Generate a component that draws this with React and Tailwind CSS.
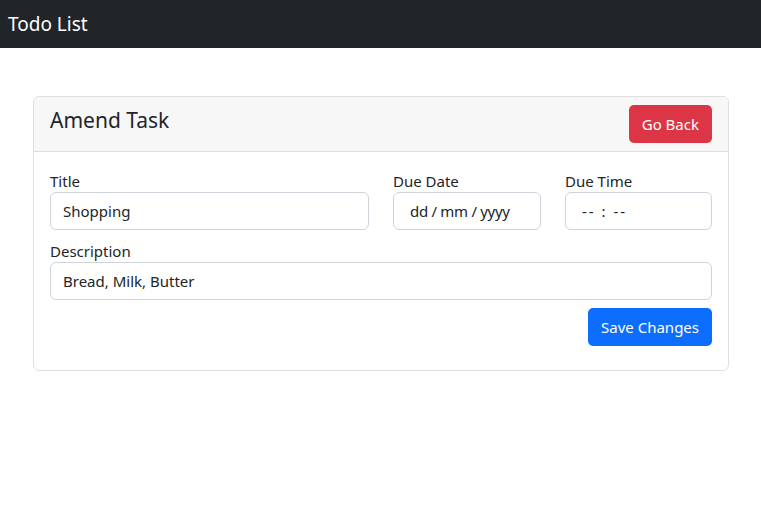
import React, { useState } from 'react';

const font = { fontFamily: '"Noto Sans", "Open Sans", sans-serif' };

export default function App() {
    const [title, setTitle] = useState('Shopping');
    const [description, setDescription] = useState('Bread, Milk, Butter');

    return (
        <div className="min-h-screen bg-white text-[#212529]" style={font}>
            <nav className="h-12 bg-[#212529] flex items-center px-2">
                <span className="text-[19px] text-white leading-none">Todo List</span>
            </nav>

            <div className="pt-12 pl-[33px] pr-8">
                <div className="border border-[#dfdfdf] rounded-[6px]">
                    <div className="h-[55px] bg-[#f7f7f7] border-b border-[#dfdfdf] flex items-start justify-between pl-4 pr-4 rounded-t-[6px]">
                        <h2 className="text-[21px] leading-none mt-[13px]">Amend Task</h2>
                        <button className="mt-2 h-[38px] px-[13px] bg-[#dc3545] text-white text-[15px] rounded-[5px]">
                            Go Back
                        </button>
                    </div>

                    <div className="px-4 pt-[18px] pb-6">
                        <div className="grid grid-cols-[319px_148px_147px] gap-x-6">
                            <div>
                                <label className="block text-[15px] leading-[22px]">Title</label>
                                <input
                                    className="w-full h-[38px] border border-[#ced4da] rounded-[6px] px-3 text-[15px] outline-none"
                                    value={title}
                                    onChange={(e) => setTitle(e.target.value)}
                                />
                            </div>
                            <div>
                                <label className="block text-[15px] leading-[22px]">Due Date</label>
                                <div className="h-[38px] border border-[#ced4da] rounded-[6px] pl-4 text-[15px] tracking-[-0.3px] flex items-center">
                                    dd / mm / yyyy
                                </div>
                            </div>
                            <div>
                                <label className="block text-[15px] leading-[22px]">Due Time</label>
                                <div className="h-[38px] border border-[#ced4da] rounded-[6px] pl-4 text-[15px] tracking-[2px] flex items-center">
                                    -- : --
                                </div>
                            </div>
                        </div>

                        <div className="mt-[10px]">
                            <label className="block text-[15px] leading-[22px]">Description</label>
                            <input
                                className="w-full h-[38px] border border-[#ced4da] rounded-[6px] px-3 text-[15px] outline-none"
                                value={description}
                                onChange={(e) => setDescription(e.target.value)}
                            />
                        </div>

                        <div className="flex justify-end mt-2">
                            <button className="h-[38px] px-[13px] bg-[#0d6efd] text-white text-[15px] rounded-[5px]">
                                Save Changes
                            </button>
                        </div>
                    </div>
                </div>
            </div>
        </div>
    );
}
